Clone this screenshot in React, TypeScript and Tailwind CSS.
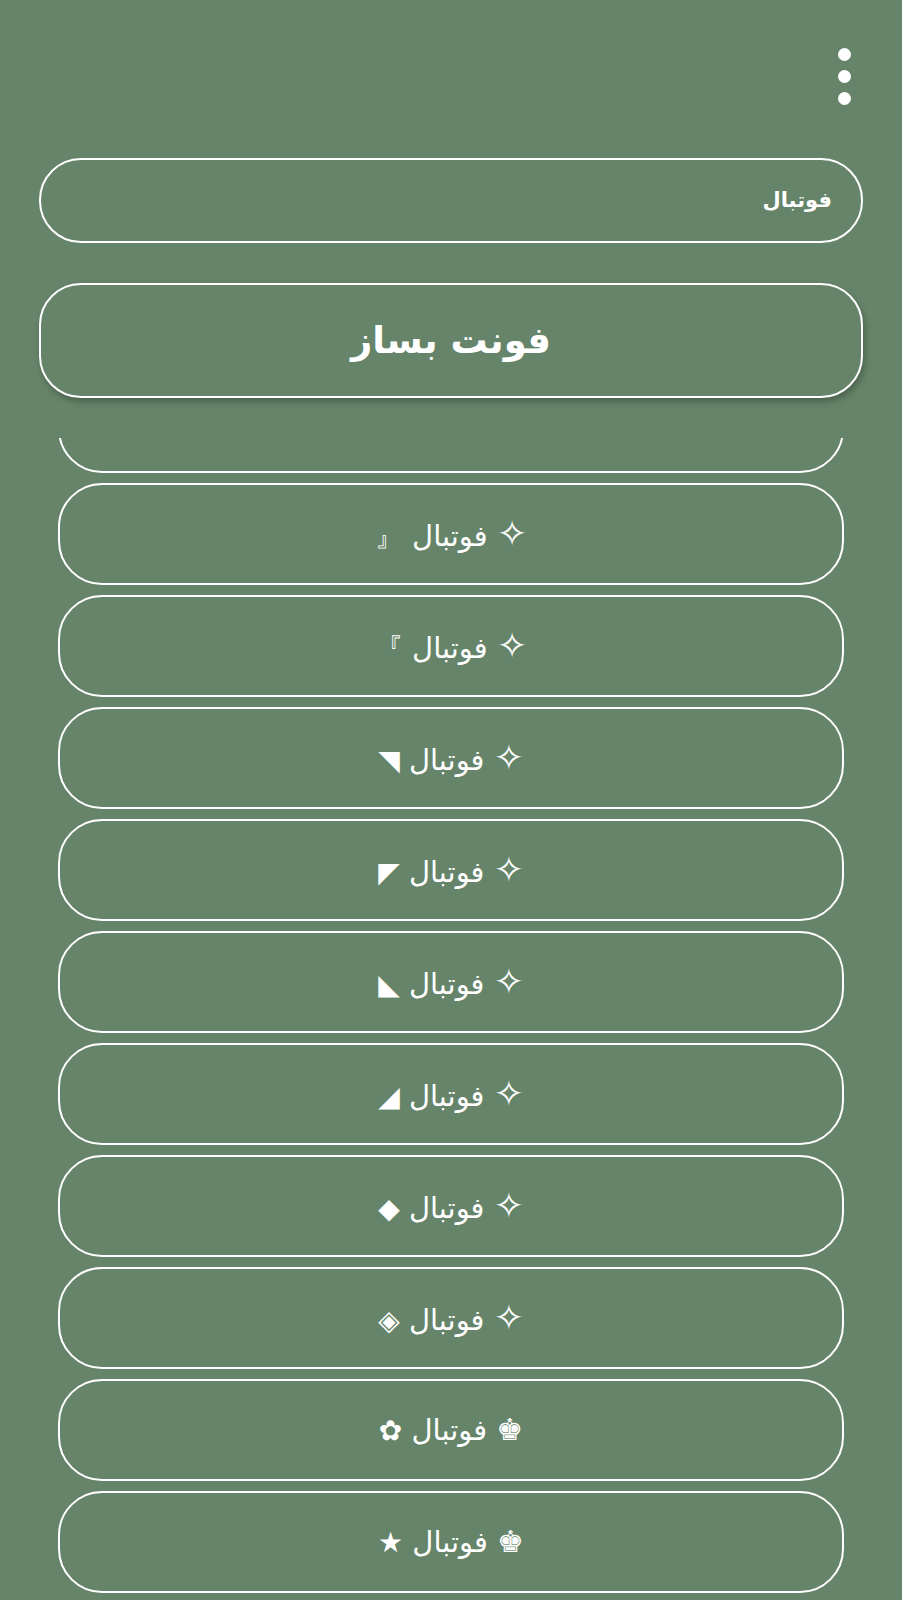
import React from "react";

type Item = { lead: string; tail: string; crown?: boolean };

const items: Item[] = [
  { lead: "✧", tail: "「" },
  { lead: "✧", tail: "『" },
  { lead: "✧", tail: "』" },
  { lead: "✧", tail: "◥" },
  { lead: "✧", tail: "◤" },
  { lead: "✧", tail: "◣" },
  { lead: "✧", tail: "◢" },
  { lead: "✧", tail: "◆" },
  { lead: "✧", tail: "◈" },
  { lead: "♚", tail: "✿", crown: true },
  { lead: "♚", tail: "★", crown: true },
];

export default function App() {
  return (
    <div
      dir="rtl"
      className="w-[902px] h-[1600px] bg-[#668469] flex flex-col overflow-hidden text-white"
      style={{ fontFamily: '"DejaVu Sans", "Noto Sans", sans-serif' }}
    >
      <div className="flex flex-row justify-start pr-[51px] pt-[48px]">
        <div className="flex flex-col gap-[9px]">
          <div className="w-[13px] h-[13px] rounded-full bg-white" />
          <div className="w-[13px] h-[13px] rounded-full bg-white" />
          <div className="w-[13px] h-[13px] rounded-full bg-white" />
        </div>
      </div>

      <div className="mx-[39px] mt-[53px] h-[85px] rounded-[42px] border-2 border-white flex items-center pr-[29px]">
        <span className="text-[21px] font-bold leading-none">فوتبال</span>
      </div>

      <div className="mx-[39px] mt-[40px] h-[115px] rounded-[42px] border-2 border-white flex items-center justify-center shadow-[2px_4px_6px_rgba(0,0,0,0.25)]">
        <span className="text-[37px] font-bold leading-none">فونت بساز</span>
      </div>

      <div className="mt-[40px] flex-1 overflow-hidden">
        <div className="-mt-[67px] flex flex-col gap-[10px] mx-[58px]">
          {items.map((t, i) => (
            <div
              key={i}
              className={
                "h-[102px] rounded-[44px] border-[2.5px] border-white flex items-center justify-center" +
                (i === 0 ? " pb-[12px]" : "")
              }
            >
              <span className="leading-none whitespace-pre">
                <span className={t.crown ? "text-[30px]" : "text-[36px]"}>{t.lead}</span>
                <span className="text-[29px]"> فوتبال </span>
                <span className="text-[28px]">{t.tail}</span>
              </span>
            </div>
          ))}
        </div>
      </div>
    </div>
  );
}
